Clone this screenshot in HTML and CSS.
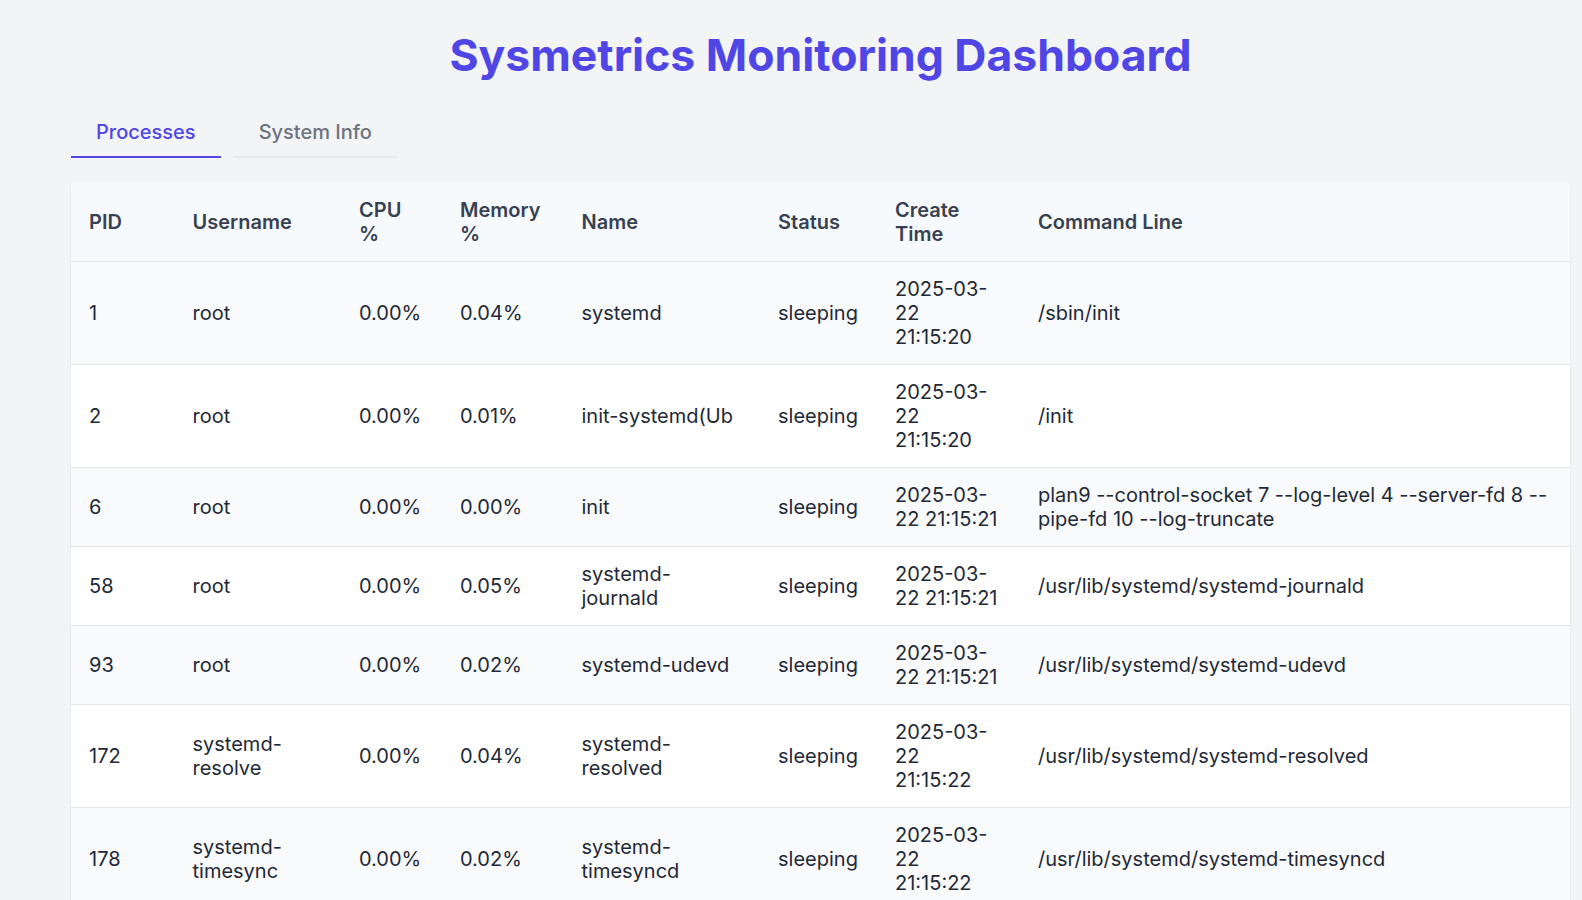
FILE: index.html
```html
<!DOCTYPE html>
<html lang="en">
<head>
<meta charset="utf-8">
<title>Sysmetrics Monitoring Dashboard</title>
<link rel="stylesheet" href="styles.css">
</head>
<body>
<main class="page">
  <h1 class="title">Sysmetrics Monitoring Dashboard</h1>
  <nav class="tabs">
    <button class="tab tab-active">Processes</button>
    <button class="tab">System Info</button>
  </nav>
  <section class="card">
    <table class="proc-table">
      <colgroup>
        <col class="c-pid"><col class="c-user"><col class="c-cpu"><col class="c-mem"><col class="c-name"><col class="c-status"><col class="c-time"><col class="c-cmd">
      </colgroup>
      <thead>
        <tr>
          <th>PID</th><th>Username</th><th>CPU %</th><th>Memory %</th><th>Name</th><th>Status</th><th>Create Time</th><th>Command Line</th>
        </tr>
      </thead>
      <tbody>
        <tr><td>1</td><td>root</td><td>0.00%</td><td>0.04%</td><td>systemd</td><td>sleeping</td><td>2025-03-22 21:15:20</td><td>/sbin/init</td></tr>
        <tr><td>2</td><td>root</td><td>0.00%</td><td>0.01%</td><td>init-systemd(Ub</td><td>sleeping</td><td>2025-03-22 21:15:20</td><td>/init</td></tr>
        <tr><td>6</td><td>root</td><td>0.00%</td><td>0.00%</td><td>init</td><td>sleeping</td><td>2025-03-22 21:15:21</td><td>plan9 --control-socket 7 --log-level 4 --server-fd 8 --pipe-fd 10 --log-truncate</td></tr>
        <tr><td>58</td><td>root</td><td>0.00%</td><td>0.05%</td><td>systemd-journald</td><td>sleeping</td><td>2025-03-22 21:15:21</td><td>/usr/lib/systemd/systemd-journald</td></tr>
        <tr><td>93</td><td>root</td><td>0.00%</td><td>0.02%</td><td>systemd-udevd</td><td>sleeping</td><td>2025-03-22 21:15:21</td><td>/usr/lib/systemd/systemd-udevd</td></tr>
        <tr><td>172</td><td>systemd-resolve</td><td>0.00%</td><td>0.04%</td><td>systemd-resolved</td><td>sleeping</td><td>2025-03-22 21:15:22</td><td>/usr/lib/systemd/systemd-resolved</td></tr>
        <tr><td>178</td><td>systemd-timesync</td><td>0.00%</td><td>0.02%</td><td>systemd-timesyncd</td><td>sleeping</td><td>2025-03-22 21:15:22</td><td>/usr/lib/systemd/systemd-timesyncd</td></tr>
      </tbody>
    </table>
  </section>
</main>
</body>
</html>
```

FILE: styles.css
```css
* { box-sizing: border-box; }

html, body {
  margin: 0;
  padding: 0;
}

body {
  background: #f3f4f6;
  font-family: Inter, "Noto Sans", "Liberation Sans", sans-serif;
  font-size: 20px;
  line-height: normal;
  color: #1f2937;
  overflow: hidden;
}

.page {
  margin-left: 71px;
  width: 1499px;
  padding-top: 28px;
}

.title {
  margin: 0;
  text-align: center;
  font-size: 44.5px;
  line-height: normal;
  font-weight: 700;
  color: #4f46e5;
}

.tabs {
  display: flex;
  gap: 13px;
  margin-top: 26px;
  margin-bottom: 25px;
}

.tab {
  font-family: inherit;
  font-size: 20px;
  line-height: normal;
  font-weight: 500;
  color: #6b7280;
  background: transparent;
  border: 0;
  border-bottom: 2px solid #e5e7eb;
  padding: 12px 25px;
  cursor: pointer;
}

.tab-active {
  color: #4f46e5;
  border-bottom-color: #4f46e5;
}

.card {
  background: #ffffff;
  border-radius: 4px;
  box-shadow: 0 1px 3px rgba(0, 0, 0, 0.08), 0 1px 2px rgba(0, 0, 0, 0.04);
  overflow: hidden;
}

.proc-table {
  width: 100%;
  border-collapse: collapse;
  table-layout: fixed;
  font-size: 20px;
  line-height: normal;
}

.c-pid { width: 103.5px; }
.c-user { width: 166.5px; }
.c-cpu { width: 101px; }
.c-mem { width: 121.5px; }
.c-name { width: 196.5px; }
.c-status { width: 117px; }
.c-time { width: 143px; }
.c-cmd { width: auto; }

.proc-table th,
.proc-table td {
  text-align: left;
  vertical-align: middle;
  padding: 15px 22px 15px 18px;
}

.proc-table thead th {
  background: #f7fafc;
  color: #374151;
  font-weight: 600;
  border-bottom: 1px solid #e5e7eb;
}

.proc-table tbody td {
  border-bottom: 1px solid #e5e7eb;
  color: #1f2937;
}

.proc-table tbody tr:nth-child(odd) td {
  background: #f9fafb;
}

.proc-table tbody tr:nth-child(even) td {
  background: #ffffff;
}
```
